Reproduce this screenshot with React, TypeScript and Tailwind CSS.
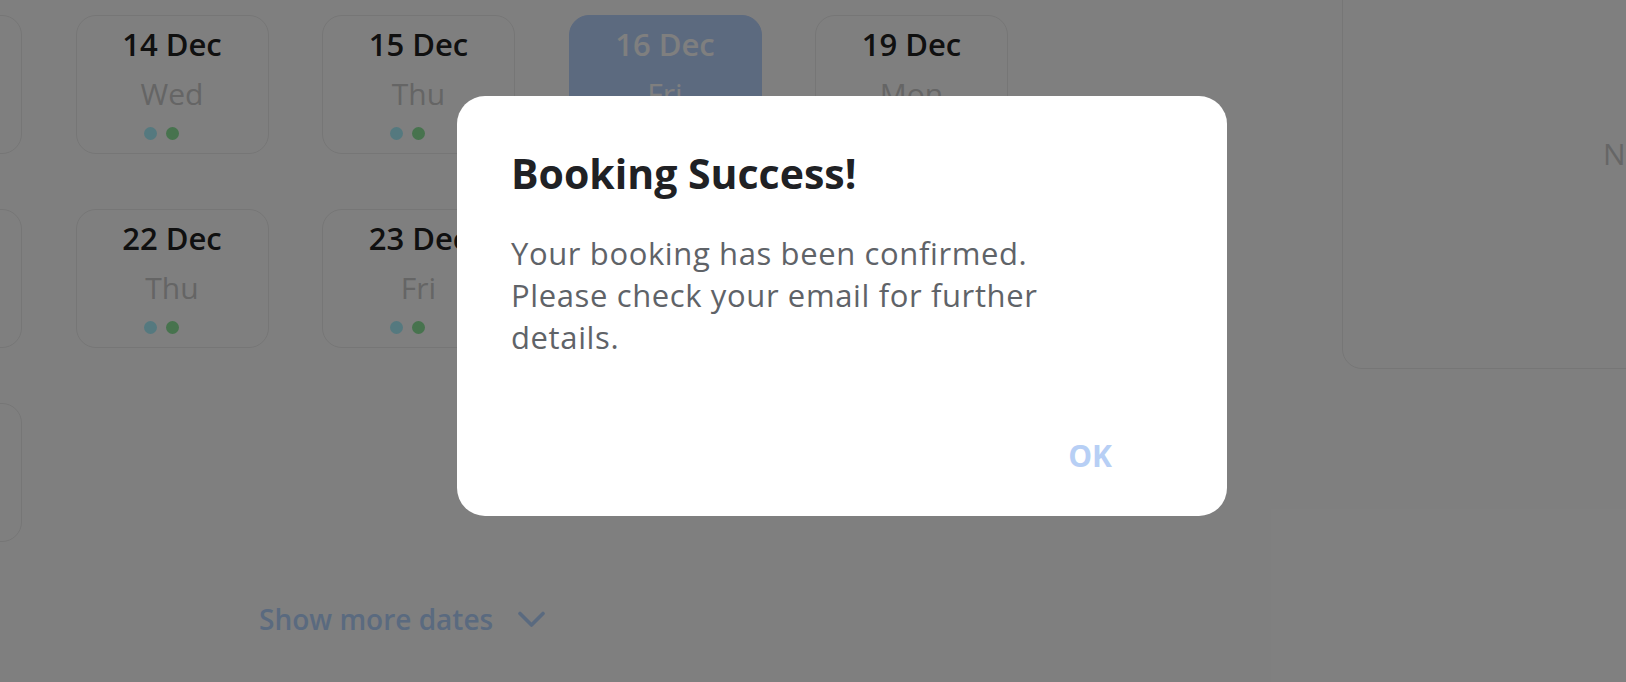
import React from "react";

type Day = { date: string; day: string; selected?: boolean };

const days: Day[] = [
  { date: "13 Dec", day: "Tue" },
  { date: "14 Dec", day: "Wed" },
  { date: "15 Dec", day: "Thu" },
  { date: "16 Dec", day: "Fri", selected: true },
  { date: "19 Dec", day: "Mon" },
  { date: "21 Dec", day: "Wed" },
  { date: "22 Dec", day: "Thu" },
  { date: "23 Dec", day: "Fri" },
  { date: "26 Dec", day: "Mon" },
  { date: "27 Dec", day: "Tue" },
  { date: "28 Dec", day: "Wed" },
];

function DateCard({ d }: { d: Day }) {
  return (
    <div
      className={
        d.selected
          ? "flex h-[139px] flex-col items-center rounded-[20px] border border-[#b8d4ff] bg-[#b8d4ff] pt-[10px]"
          : "flex h-[139px] flex-col items-center rounded-[20px] border border-[#ececec] bg-white pt-[10px]"
      }
    >
      <div
        className={
          d.selected
            ? "text-[31px] font-semibold leading-[36px] text-white"
            : "text-[31px] font-semibold leading-[36px] text-[#202020]"
        }
      >
        {d.date}
      </div>
      <div
        className={
          d.selected
            ? "mt-[14px] text-[30px] leading-[36px] text-white"
            : "mt-[14px] text-[30px] leading-[36px] text-[#cacaca]"
        }
      >
        {d.day}
      </div>
      {/* three slot markers, the last one empty */}
      <div className="mt-[15px] flex gap-[9px]">
        <span className="h-[13px] w-[13px] rounded-full bg-[#aaf2ff]" />
        <span className="h-[13px] w-[13px] rounded-full bg-[#8ee69c]" />
        <span className="h-[13px] w-[13px] rounded-full bg-transparent" />
      </div>
    </div>
  );
}

export default function App() {
  return (
    <div className="relative h-[682px] w-full overflow-hidden bg-white font-['Open_Sans',sans-serif]">
      <div className="flex pt-[15px]">
        <div className="-ml-[171px] flex shrink-0 flex-col">
          <div className="grid grid-cols-[repeat(5,193px)] gap-x-[53.5px] gap-y-[55px]">
            {days.map((d) => (
              <DateCard key={d.date} d={d} />
            ))}
          </div>
          <button className="ml-[430px] mt-[59px] flex items-center gap-[25px] text-[28px] font-semibold leading-[36px] text-[#b4d4ff]">
            Show more dates
            <svg width="27" height="17" viewBox="0 0 27 17" fill="none">
              <polyline points="2,2.5 13.5,14 25,2.5" stroke="#b4d4ff" strokeWidth="3.6" strokeLinecap="round" strokeLinejoin="round" />
            </svg>
          </button>
        </div>
        <div className="ml-[334px] -mt-[78px] flex h-[432px] w-[766px] shrink-0 items-center justify-center rounded-[20px] border border-[#ececec]">
          <span className="text-[30px] text-[#cccccc]">No slots available</span>
        </div>
      </div>

      {/* scrim */}
      <div className="absolute inset-0 bg-black/50" />

      <div className="absolute left-[457px] top-[96px] flex h-[420px] w-[770px] flex-col rounded-[28px] bg-white pl-[54px] pr-[115px] pt-[53px]">
        <h2 className="text-[41px] font-bold leading-[48px] text-[#202124]">Booking Success!</h2>
        <p className="mt-[35px] w-[560px] text-[31px] leading-[42px] tracking-[0.02em] text-[#5f6368]">
          Your booking has been confirmed. Please check your email for further details.
        </p>
        <div className="mt-auto mb-[42px] flex justify-end">
          <button className="text-[30px] font-bold leading-[36px] text-[#b7cff5]">OK</button>
        </div>
      </div>
    </div>
  );
}
